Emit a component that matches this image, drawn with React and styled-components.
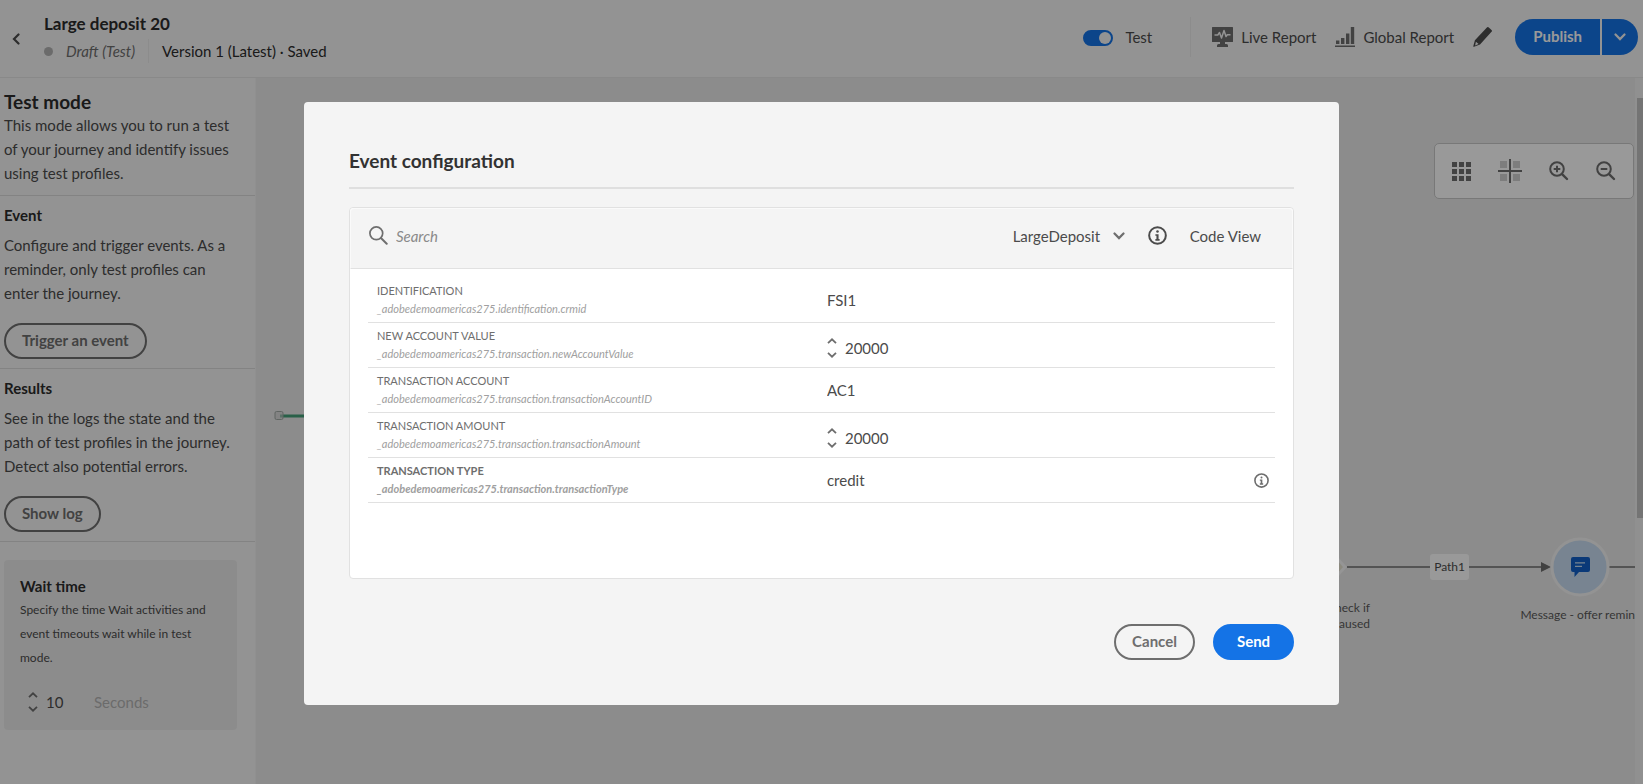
import React, { useState } from 'react';
import styled, { createGlobalStyle, css } from 'styled-components';

const GlobalStyle = createGlobalStyle`
  *, *::before, *::after { box-sizing: border-box; }
  body {
    margin: 0;
    background: #f5f5f5;
    color: #4b4b4b;
    font-family: Lato, "Open Sans", sans-serif;
    font-size: 15px;
    line-height: 24px;
    overflow: hidden;
  }
  h1, h2, h3, p { margin: 0; }
  button, input, select { font: inherit; color: inherit; }
`;

/* ---------- shared controls ---------- */

const PillButton = styled.button`
  height: 36px;
  padding: 0 16px 2px;
  border: 2px solid #6e6e6e;
  border-radius: 18px;
  background: transparent;
  color: #6e6e6e;
  font-weight: 700;
  line-height: 20px;
  white-space: nowrap;
  cursor: pointer;
  ${(p) => p.$primary && css`
    border-color: #1473e6;
    background: #1473e6;
    color: #ffffff;
  `}
  ${(p) => p.$wide && css`
    min-width: 81px;
  `}
`;

const PlainButton = styled.button`
  display: inline-flex;
  align-items: center;
  gap: ${(p) => p.$gap || 0}px;
  padding: 0;
  border: 0;
  background: none;
  white-space: nowrap;
  cursor: pointer;
`;

const StepperBox = styled.span`
  display: inline-flex;
  align-items: center;
  gap: 8px;
`;

const StepperArrows = styled.span`
  display: inline-flex;
  flex-direction: column;
  gap: 8px;
`;

const ArrowButton = styled(PlainButton)`
  width: 10px;
  height: 6px;
  svg { display: block; }
`;

const BareInput = styled.input`
  width: ${(p) => p.$width};
  height: 24px;
  padding: 0;
  border: 0;
  outline: 0;
  background: transparent;
  color: #4b4b4b;
  &::placeholder { color: #8a8a8a; opacity: 1; font-style: italic; }
`;

const UpIcon = () => (
  <svg width="10" height="6" viewBox="0 0 10 6" fill="none" stroke="#6e6e6e" strokeWidth="1.8"><path d="M1 5.2 5 1.3 9 5.2" /></svg>
);
const DownIcon = () => (
  <svg width="10" height="6" viewBox="0 0 10 6" fill="none" stroke="#6e6e6e" strokeWidth="1.8"><path d="M1 .8 5 4.7 9 .8" /></svg>
);

function Stepper({ id, initial, label, width }) {
  const [value, setValue] = useState(initial);
  return (
    <StepperBox>
      <StepperArrows>
        <ArrowButton type="button" aria-label="Increase" onClick={() => setValue(Number(value) + 1)}><UpIcon /></ArrowButton>
        <ArrowButton type="button" aria-label="Decrease" onClick={() => setValue(Number(value) - 1)}><DownIcon /></ArrowButton>
      </StepperArrows>
      <BareInput id={id} aria-label={label} inputMode="numeric" $width={width} value={value} onChange={(e) => setValue(e.target.value)} />
    </StepperBox>
  );
}

/* ---------- header ---------- */

const Page = styled.div`
  display: flex;
  flex-direction: column;
  height: 100vh;
`;

const Header = styled.header`
  display: flex;
  align-items: flex-start;
  justify-content: space-between;
  height: 78px;
  padding: 12px 5px 0 12px;
  border-bottom: 1px solid #e4e4e4;
`;

const TitleGroup = styled.div`
  display: flex;
  align-items: center;
  gap: 24px;
`;

const Title = styled.h1`
  color: #2c2c2c;
  font-size: 17px;
  font-weight: 700;
  line-height: 24px;
`;

const StatusLine = styled.div`
  display: flex;
  align-items: center;
  line-height: 30px;
  gap: 13px;
`;

const StatusDot = styled.span`
  width: 9px;
  height: 9px;
  border-radius: 50%;
  background: #b3b3b3;
`;

const StatusText = styled.em`
  color: #6e6e6e;
`;

const StatusDivider = styled.span`
  width: 1px;
  height: 24px;
  background: #eaeaea;
`;

const VersionText = styled.span`
  color: #2c2c2c;
`;

const HeaderActions = styled.div`
  display: flex;
  align-items: center;
  height: 50px;
`;

const ToggleLabel = styled.label`
  display: flex;
  align-items: center;
  gap: 12px;
`;

const ToggleInput = styled.input`
  appearance: none;
  display: flex;
  align-items: center;
  justify-content: flex-end;
  width: 30px;
  height: 16px;
  margin: 2px 0 0;
  border: 2px solid #1473e6;
  border-radius: 8px;
  background: #1473e6;
  &::after {
    content: '';
    width: 12px;
    height: 12px;
    border-radius: 50%;
    background: #f5f5f5;
  }
  &:not(:checked) { justify-content: flex-start; border-color: #6e6e6e; background: #6e6e6e; }
`;

const ActionDivider = styled.span`
  width: 1px;
  height: 40px;
  margin: 0 21px 0 38px;
  background: #eaeaea;
`;

const ReportButtons = styled.div`
  display: flex;
  align-items: center;
  gap: 19px;
`;

const SplitButton = styled.div`
  display: flex;
  gap: 2px;
  height: 36px;
  margin-left: 23px;
`;

const SplitMain = styled.button`
  padding: 0 18px 3px;
  border: 0;
  border-radius: 18px 0 0 18px;
  background: #1473e6;
  color: #ffffff;
  font-weight: 700;
  line-height: 20px;
`;

const SplitMenu = styled.button`
  display: flex;
  align-items: center;
  justify-content: center;
  width: 36px;
  padding: 0;
  border: 0;
  border-radius: 0 18px 18px 0;
  background: #1473e6;
`;

const LiveIcon = () => (
  <svg width="21" height="20" viewBox="0 0 21 20">
    <path fill="#6e6e6e" d="M.6 0h19.8a.6.6 0 0 1 .6.6v13.8a.6.6 0 0 1-.6.6H13v2h1.5A1.5 1.5 0 0 1 16 18.500V20H5v-1.500A1.500 1.500 0 0 1 6.500 17H8v-2H.6a.6.6 0 0 1-.6-.6V.6A.6.6 0 0 1 .6 0z" />
    <path fill="none" stroke="#f5f5f5" strokeWidth="1.5" strokeLinejoin="round" d="M2.500 8h3.300l1.700-2.500 2 5.500L12 3.500l2 6 1.300-1.800h3.200" />
  </svg>
);

const BarsIcon = () => (
  <svg width="20" height="20" viewBox="0 0 20 20" fill="#6e6e6e">
    <path d="M1 13.500h3.400V17H1zM6 11h3.400v6H6zM11 6.500h3.400V17H11zM15.800 0h3.400v17h-3.400zM0 18.500h20V20H0z" />
  </svg>
);

const PencilIcon = () => (
  <svg width="19" height="20" viewBox="0 0 19 20">
    <path fill="#4b4b4b" d="M13.900.5a1.300 1.300 0 0 1 1.900 0l2.700 2.500a1.200 1.200 0 0 1 0 1.800L7 17.600l-6 2.200c-.5.200-.8-.1-.7-.6l1.600-6z" />
    <path fill="#f5f5f5" d="m2.900 14.800 2.700 2.300-3.500 1.400z" />
  </svg>
);

const ChevronIcon = ({ color }) => (
  <svg width="12" height="8" viewBox="0 0 12 8" fill="none" stroke={color} strokeWidth="2.200" strokeLinecap="round"><path d="m1.500 1.500 4.500 4.600 4.500-4.600" /></svg>
);

const BackIcon = () => (
  <svg width="8" height="12" viewBox="0 0 8 12" fill="none" stroke="#4b4b4b" strokeWidth="2.200" strokeLinecap="round"><path d="M6.500 1.500 2 6l4.500 4.500" /></svg>
);

/* ---------- left panel ---------- */

const Body = styled.div`
  display: flex;
  flex: 1;
  min-height: 0;
`;

const SidePanel = styled.aside`
  flex: 0 0 256px;
  border-right: 1px solid #f0f0f0;
`;

const PanelSection = styled.section`
  padding: ${(p) => (p.$first ? '13px 16px 10px 4px' : '7px 16px 9px 4px')};
  border-bottom: 1px solid #dadada;
`;

const PanelTitle = styled.h2`
  color: #2c2c2c;
  font-size: 19px;
  font-weight: 700;
  line-height: 22px;
`;

const SectionTitle = styled.h3`
  color: #2c2c2c;
  font-size: 15px;
  font-weight: 700;
  line-height: 24px;
`;

const SectionText = styled.p`
  margin: 6px 0 18px;
`;

const WaitCard = styled.section`
  margin: 18px 18px 0 4px;
  padding: 14px 16px 16px;
  border-radius: 4px;
  background: #eaeaea;
`;

const WaitText = styled.p`
  font-size: 12px;
`;

const WaitRow = styled.div`
  display: flex;
  align-items: center;
  gap: 8px;
  padding: 20px 8px 0;
`;

const UnitText = styled.span`
  color: #b3b3b3;
`;

/* ---------- canvas ---------- */

const Canvas = styled.main`
  position: relative;
  flex: 1;
  min-width: 0;
  overflow: hidden;
  background: #eaeaea;
`;

const Track = styled.div`
  display: flex;
  justify-content: flex-end;
  flex: 0 0 8px;
  padding-top: 20px;
  background: #f0f0f0;
`;

const Thumb = styled.div`
  width: 6px;
  height: 420px;
  background: #c1c1c1;
`;

const CanvasTools = styled.div`
  position: absolute;
  top: 65px;
  right: 1px;
  display: flex;
  align-items: center;
  justify-content: space-around;
  width: 200px;
  height: 56px;
  padding: 0 4px;
  border: 1px solid #c8c8c8;
  border-radius: 5px;
  background: #ffffff;
`;

const EntryLink = styled.svg`
  position: absolute;
  left: 18px;
  top: 332px;
`;

const FlowLine = styled.svg`
  position: absolute;
  right: 0;
  top: 449px;
`;

const PathTag = styled.span`
  position: absolute;
  right: 166px;
  top: 476px;
  padding: 0 4px;
  border-radius: 3px;
  background: #ffffff;
  font-size: 12px;
  line-height: 26px;
`;

const NodeLabel = styled.span`
  position: absolute;
  right: ${(p) => p.$right}px;
  top: ${(p) => p.$top}px;
  color: #5a5a5a;
  font-size: 12px;
  line-height: 16px;
  text-align: right;
  white-space: pre;
`;

const GridIcon = () => (
  <svg width="19" height="19" viewBox="0 0 19 19" fill="#6e6e6e">
    <path d="M0 0h5v5H0zM7 0h5v5H7zM14 0h5v5h-5zM0 7h5v5H0zM7 7h5v5H7zM14 7h5v5h-5zM0 14h5v5H0zM7 14h5v5H7zM14 14h5v5h-5z" />
  </svg>
);

const AlignIcon = () => (
  <svg width="24" height="24" viewBox="0 0 24 24">
    <path fill="#d0d0d0" d="M2 2h7v7H2zM15 2h7v7h-7zM2 15h7v7H2zM15 15h7v7h-7z" />
    <path fill="#6e6e6e" d="M11 0h2v11h11v2H13v11h-2V13H0v-2h11z" />
  </svg>
);

const ZoomIcon = ({ plus }) => (
  <svg width="20" height="20" viewBox="0 0 20 20" fill="none" stroke="#6e6e6e" strokeWidth="2">
    <circle cx="8" cy="8" r="6.800" />
    <path d={plus ? 'M4.700 8h6.600M8 4.700v6.600' : 'M4.700 8h6.600'} />
    <path strokeWidth="2.400" strokeLinecap="round" d="m13.300 13.300 4.700 4.700" />
  </svg>
);

/* ---------- dialog ---------- */

const Underlay = styled.div`
  position: fixed;
  inset: 0;
  display: flex;
  align-items: flex-start;
  justify-content: center;
  padding-top: 102px;
  background: rgba(0, 0, 0, 0.4);
`;

const Dialog = styled.div`
  width: 63%;
  padding: 45px;
  border-radius: 4px;
  background: #f4f4f4;
`;

const DialogTitle = styled.h2`
  padding-bottom: 12px;
  border-bottom: 2px solid #dfdfdf;
  color: #323232;
  font-size: 19px;
  font-weight: 700;
  line-height: 28px;
`;

const FieldPanel = styled.section`
  min-height: 372px;
  margin-top: 18px;
  border: 1px solid #e1e1e1;
  border-radius: 4px;
  background: #ffffff;
`;

const FieldToolbar = styled.div`
  display: flex;
  align-items: center;
  justify-content: space-between;
  height: 61px;
  padding: 0 31px 6px 18px;
  border: 1px solid #fafafa;
  border-bottom-color: #e1e1e1;
  border-radius: 4px 4px 0 0;
  background: #f4f4f4;
`;

const ToolGroup = styled.div`
  display: flex;
  align-items: center;
  gap: ${(p) => p.$gap}px;
`;

const SelectBox = styled.span`
  display: flex;
  align-items: center;
  gap: 12px;
`;

const EventSelect = styled.select`
  appearance: none;
  height: 24px;
  padding: 0;
  border: 0;
  background: transparent;
`;

const FieldList = styled.div`
  padding: 9px 18px 0;
`;

const FieldRow = styled.div`
  display: grid;
  grid-template-columns: 450px 1fr auto;
  align-items: center;
  height: 45px;
  padding: 0 6px 0 9px;
  border-bottom: 1px solid #e1e1e1;
`;

const FieldLabel = styled.label`
  color: #6e6e6e;
  font-size: 11px;
  font-weight: ${(p) => (p.$strong ? 700 : 400)};
  line-height: 18px;
  text-transform: uppercase;
`;

const FieldPath = styled.em`
  display: block;
  color: #a0a0a0;
  text-transform: none;
`;

const StepperCell = styled.span`
  display: flex;
  padding-top: 6px;
`;

const DialogFooter = styled.footer`
  display: flex;
  justify-content: flex-end;
  gap: 18px;
  margin-top: 45px;
`;

const SearchIcon = () => (
  <svg width="19" height="19" viewBox="0 0 19 19" fill="none" stroke="#6e6e6e" strokeWidth="1.700"><circle cx="7.300" cy="7.300" r="6.400" /><path strokeWidth="2" strokeLinecap="round" d="m12.200 12.200 5.500 5.500" /></svg>
);

const InfoIcon = ({ size, color }) => (
  <svg width={size} height={size} viewBox="0 0 18 18">
    <circle cx="9" cy="9" r="7.900" fill="none" stroke={color} strokeWidth="1.900" />
    <circle cx="9" cy="5.300" r="1.200" fill={color} />
    <path fill={color} d="M7 7.800h3v4.600h1V14H7v-1.600h1V9.300H7z" />
  </svg>
);

const FIELDS = [
  { id: 'crmid', name: 'Identification', path: '_adobedemoamericas275.identification.crmid', value: 'FSI1' },
  { id: 'newAccountValue', name: 'New account value', path: '_adobedemoamericas275.transaction.newAccountValue', value: '20000', numeric: true },
  { id: 'accountId', name: 'Transaction account', path: '_adobedemoamericas275.transaction.transactionAccountID', value: 'AC1' },
  { id: 'amount', name: 'Transaction amount', path: '_adobedemoamericas275.transaction.transactionAmount', value: '20000', numeric: true },
  { id: 'type', name: 'Transaction type', path: '_adobedemoamericas275.transaction.transactionType', value: 'credit', strong: true, info: true },
];

function EventDialog() {
  return (
    <Underlay>
      <Dialog role="dialog" aria-labelledby="dialog-title">
        <DialogTitle id="dialog-title">Event configuration</DialogTitle>
        <FieldPanel>
          <FieldToolbar>
            <ToolGroup $gap={8}>
              <SearchIcon />
              <BareInput type="text" aria-label="Search" placeholder="Search" $width="220px" />
            </ToolGroup>
            <ToolGroup $gap={23}>
              <SelectBox>
                <EventSelect aria-label="Event"><option>LargeDeposit</option></EventSelect>
                <ChevronIcon color="#6e6e6e" />
              </SelectBox>
              <PlainButton type="button" aria-label="Event information"><InfoIcon size={19} color="#4b4b4b" /></PlainButton>
              <PlainButton type="button">Code View</PlainButton>
            </ToolGroup>
          </FieldToolbar>
          <FieldList>
            {FIELDS.map((f) => (
              <FieldRow key={f.id}>
                <FieldLabel htmlFor={f.id} $strong={f.strong}>
                  {f.name}
                  <FieldPath>{f.path}</FieldPath>
                </FieldLabel>
                {f.numeric
                  ? <StepperCell><Stepper id={f.id} initial={f.value} width="120px" /></StepperCell>
                  : <BareInput id={f.id} type="text" defaultValue={f.value} $width="100%" />}
                {f.info && <PlainButton type="button" aria-label="Field information"><InfoIcon size={15} color="#6e6e6e" /></PlainButton>}
              </FieldRow>
            ))}
          </FieldList>
        </FieldPanel>
        <DialogFooter>
          <PillButton type="button" $wide>Cancel</PillButton>
          <PillButton type="button" $wide $primary>Send</PillButton>
        </DialogFooter>
      </Dialog>
    </Underlay>
  );
}

function JourneyCanvas() {
  return (
    <Canvas>
      <EntryLink width="60" height="12" viewBox="0 0 60 12">
        <path d="M6 6h54" stroke="#45a078" strokeWidth="3" />
        <rect x="1" y="1.500" width="8" height="8" rx="1.500" fill="#d0d0d0" fillOpacity=".6" stroke="#a0a8a4" />
      </EntryLink>
      <FlowLine width="330" height="80" viewBox="0 0 330 80">
        <path d="M22 20 40 40 22 60 4 40z" fill="#e8e4d2" stroke="#f8f8f8" strokeWidth="3" />
        <path d="M42 40h195M303 40h27" stroke="#6e6e6e" strokeWidth="1.400" />
        <path d="m236 35 10 5-10 5z" fill="#6e6e6e" />
        <circle cx="275" cy="40" r="28" fill="#c8ddf2" stroke="#f5f5f5" strokeWidth="3" />
        <path fill="#1260c8" d="M268 30h15a2 2 0 0 1 2 2v11a2 2 0 0 1-2 2h-9l-4.500 5v-5H268a2 2 0 0 1-2-2V32a2 2 0 0 1 2-2z" />
        <path stroke="#c8ddf2" strokeWidth="1.300" d="M270 35.800h10M270 39.300h7" />
      </FlowLine>
      <PathTag>Path1</PathTag>
      <NodeLabel $right={265} $top={522}>{'Check if\npaused'}</NodeLabel>
      <NodeLabel $right={0} $top={529}>Message - offer remin</NodeLabel>
      <CanvasTools>
        <PlainButton type="button" aria-label="Toggle grid"><GridIcon /></PlainButton>
        <PlainButton type="button" aria-label="Center"><AlignIcon /></PlainButton>
        <PlainButton type="button" aria-label="Zoom in"><ZoomIcon plus /></PlainButton>
        <PlainButton type="button" aria-label="Zoom out"><ZoomIcon /></PlainButton>
      </CanvasTools>
    </Canvas>
  );
}

export default function App() {
  return (
    <>
      <GlobalStyle />
      <Page>
        <Header>
          <TitleGroup>
            <PlainButton type="button" aria-label="Back"><BackIcon /></PlainButton>
            <div>
              <Title>Large deposit 20</Title>
              <StatusLine>
                <StatusDot />
                <StatusText>Draft (Test)</StatusText>
                <StatusDivider />
                <VersionText>Version 1 (Latest) · Saved</VersionText>
              </StatusLine>
            </div>
          </TitleGroup>
          <HeaderActions>
            <ToggleLabel><ToggleInput type="checkbox" role="switch" defaultChecked />Test</ToggleLabel>
            <ActionDivider />
            <ReportButtons>
              <PlainButton type="button" $gap={8}><LiveIcon />Live Report</PlainButton>
              <PlainButton type="button" $gap={8}><BarsIcon />Global Report</PlainButton>
              <PlainButton type="button" aria-label="Edit"><PencilIcon /></PlainButton>
            </ReportButtons>
            <SplitButton>
              <SplitMain type="button">Publish</SplitMain>
              <SplitMenu type="button" aria-label="More publish options"><ChevronIcon color="#f5f5f5" /></SplitMenu>
            </SplitButton>
          </HeaderActions>
        </Header>
        <Body>
          <SidePanel>
            <PanelSection $first>
              <PanelTitle>Test mode</PanelTitle>
              <p>This mode allows you to run a test of your journey and identify issues using test profiles.</p>
            </PanelSection>
            <PanelSection>
              <SectionTitle>Event</SectionTitle>
              <SectionText>Configure and trigger events. As a reminder, only test profiles can enter the journey.</SectionText>
              <PillButton type="button">Trigger an event</PillButton>
            </PanelSection>
            <PanelSection>
              <SectionTitle>Results</SectionTitle>
              <SectionText>See in the logs the state and the path of test profiles in the journey. Detect also potential errors.</SectionText>
              <PillButton type="button">Show log</PillButton>
            </PanelSection>
            <WaitCard>
              <SectionTitle>Wait time</SectionTitle>
              <WaitText>Specify the time Wait activities and event timeouts wait while in test mode.</WaitText>
              <WaitRow>
                <Stepper label="Wait time" initial="10" width="40px" />
                <UnitText>Seconds</UnitText>
              </WaitRow>
            </WaitCard>
          </SidePanel>
          <JourneyCanvas />
          <Track><Thumb /></Track>
        </Body>
      </Page>
      <EventDialog />
    </>
  );
}
